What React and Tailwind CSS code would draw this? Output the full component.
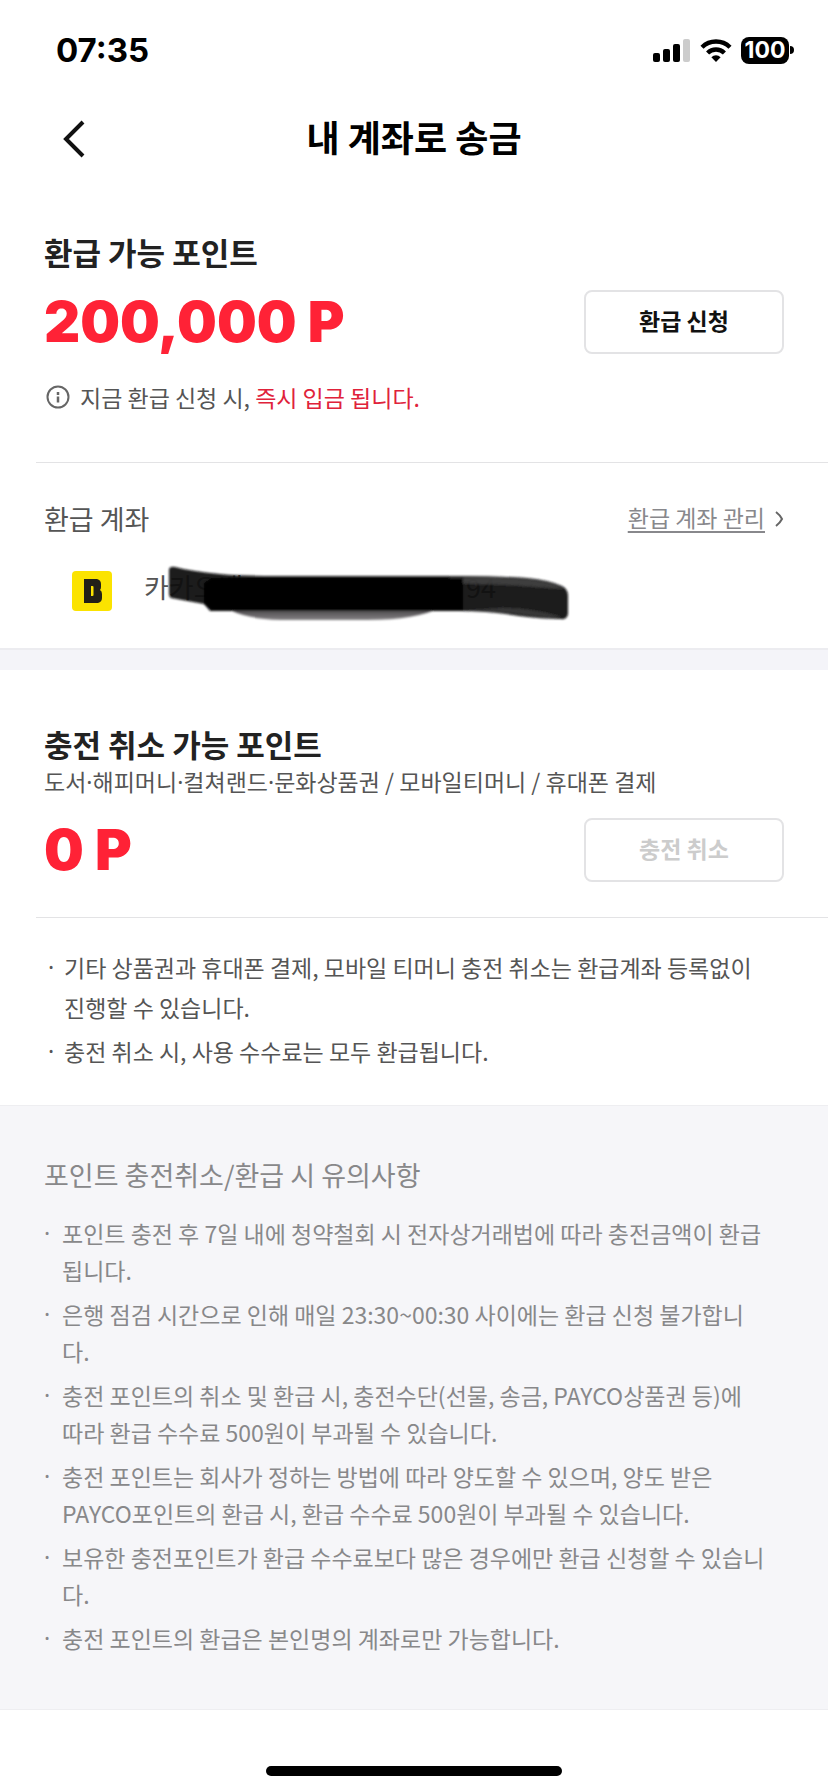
import React from 'react';

const chargeNotes = [
  '기타 상품권과 휴대폰 결제, 모바일 티머니 충전 취소는 환급계좌 등록없이 진행할 수 있습니다.',
  '충전 취소 시, 사용 수수료는 모두 환급됩니다.',
];

const cautions = [
  '포인트 충전 후 7일 내에 청약철회 시 전자상거래법에 따라 충전금액이 환급됩니다.',
  '은행 점검 시간으로 인해 매일 23:30~00:30 사이에는 환급 신청 불가합니다.',
  '충전 포인트의 취소 및 환급 시, 충전수단(선물, 송금, PAYCO상품권 등)에 따라 환급 수수료 500원이 부과될 수 있습니다.',
  '충전 포인트는 회사가 정하는 방법에 따라 양도할 수 있으며, 양도 받은 PAYCO포인트의 환급 시, 환급 수수료 500원이 부과될 수 있습니다.',
  '보유한 충전포인트가 환급 수수료보다 많은 경우에만 환급 신청할 수 있습니다.',
  '충전 포인트의 환급은 본인명의 계좌로만 가능합니다.',
];

const StatusBar = () => (
  <div className="h-[100px] pl-14 pr-[34px] flex items-center justify-between font-['Inter',sans-serif] text-black">
    <span className="text-[33px] leading-10 font-bold">07:35</span>
    <div className="flex items-center gap-[9px]">
      <svg width="38" height="24" viewBox="0 0 38 24" aria-hidden="true">
        <rect x="0" y="15" width="7" height="9" rx="2" />
        <rect x="10" y="11" width="7" height="13" rx="2" />
        <rect x="20" y="6" width="7" height="18" rx="2" />
        <rect x="30" y="1" width="7" height="23" rx="2" fill="#cccccc" />
      </svg>
      <svg width="32" height="24" viewBox="0 0 32 24" fill="none" stroke="#000" strokeWidth="4.4" aria-hidden="true">
        <path d="M2 9.2a20 20 0 0 1 28 0" />
        <path d="M7.6 15a12 12 0 0 1 16.8 0" />
        <path d="M16 24l-4.6-4.8a6.6 6.6 0 0 1 9.2 0z" fill="#000" stroke="none" />
      </svg>
      <div className="flex items-center gap-px">
        <span className="w-12 h-[27px] rounded-lg bg-black text-white text-[23px] leading-[27px] font-bold text-center">100</span>
        <span className="w-1 h-2 rounded-r-full bg-black" />
      </div>
    </div>
  </div>
);

const Header = () => (
  <header className="h-[78px] px-14 grid grid-cols-[40px_1fr_40px] items-center">
    <button type="button" aria-label="뒤로" className="h-10 flex items-center pl-1.5">
      <svg width="24" height="38" viewBox="0 0 24 38" fill="none" stroke="#111" strokeWidth="4">
        <path d="M21 2L4 19l17 17" />
      </svg>
    </button>
    <h1 className="pb-1.5 text-[36px] leading-[52px] font-bold text-center text-black">내 계좌로 송금</h1>
  </header>
);

const Amount = ({ value }) => (
  <p className="font-['Inter',sans-serif] text-[56px] leading-[64px] font-black text-[#ff2236]">{value} P</p>
);

const Dot = ({ className }) => <span className={`font-['Noto_Sans',sans-serif] ${className}`}>·</span>;

const NoteList = ({ items, className, dotClass }) => (
  <ul className={className}>
    {items.map((text) => (
      <li key={text} className="flex">
        <Dot className={dotClass} />
        <span className="flex-1">{text}</span>
      </li>
    ))}
  </ul>
);

const BankLogo = () => (
  <svg width="40" height="40" viewBox="0 0 40 40" aria-hidden="true">
    <rect width="40" height="40" rx="4" fill="#fbe300" />
    <path
      fillRule="evenodd"
      fill="#222018"
      d="M12 8h13q4 1 4 5v3q0 2-1 3 2 1 2 4v4q0 4-4 5H12zM19 15v10h1.500q1 0 1-1v-8q0-1-1-1z"
    />
  </svg>
);

// marker strokes hiding the account number
const Redaction = () => (
  <svg className="absolute left-4 top-[-10px]" width="416" height="64" viewBox="0 0 416 64" aria-hidden="true">
    <defs>
      <linearGradient id="fade" gradientUnits="userSpaceOnUse" x1="0" y1="46" x2="0" y2="60">
        <stop offset="0" stopColor="#3a383a" />
        <stop offset="1" stopColor="#8a878a" />
      </linearGradient>
      <filter id="soft" x="-5%" y="-10%" width="110%" height="120%">
        <feGaussianBlur stdDeviation="1" />
      </filter>
    </defs>
    <g filter="url(#soft)">
      <path d="M55 46h227q-26 13-74 13H120q-32-1-50-10z" fill="url(#fade)" />
      <path
        d="M9 8q1-3 6-2 15 4 45 7 20 2 60 2h180q40 0 67 2 22 2 35 8 6 3 6 10v18q-1 6-7 5-20 0-42-3-30-5-60-5H50L44 43 11 37q-2-1-2-5z"
        fill="#0c0c0d"
        fillOpacity="0.94"
      />
      <path d="M290 16q46-1 76 2 26 2 38 10-26-2-52-4l-62-2z" fill="#4a494b" fillOpacity="0.75" />
      <path d="M302 50l40-3q30 0 60 9-20 2-36-2-30-4-64-4z" fill="#4a494b" fillOpacity="0.6" />
      <path d="M52 17h251v32H52l-8-6V22z" fill="#000" />
    </g>
  </svg>
);

const App = () => {
  return (
    <div className="w-full bg-white font-['Noto_Sans_CJK_KR',sans-serif] text-[23px] text-[#555555]">
      <StatusBar />
      <Header />

      <main>
        {/* 환급 가능 포인트 */}
        <section className="pt-[54px] pb-[49px] px-11">
          <h2 className="text-[31px] leading-10 font-bold text-[#222222]">환급 가능 포인트</h2>
          <div className="mt-[18px] flex items-center justify-between">
            <Amount value="200,000" />
            <button type="button" className="w-[200px] h-16 pb-1 rounded-lg border-2 border-[#e3e3e5] font-bold text-[#111111]">
              환급 신청
            </button>
          </div>
          <p className="mt-[27px] flex items-center gap-2 leading-8">
            <svg width="28" height="26" viewBox="0 0 28 26" fill="none" stroke="#666" strokeWidth="2" aria-hidden="true">
              <circle cx="14" cy="13" r="10.500" />
              <path d="M14 8v3M14 12.500v6" strokeWidth="2.500" />
            </svg>
            <span>
              지금 환급 신청 시, <span className="text-[#e0223a]">즉시 입금 됩니다.</span>
            </span>
          </p>
        </section>

        {/* 환급 계좌 */}
        <section className="pb-[37px]">
          <div className="ml-9 border-t border-[#e3e3e5]" />
          <div className="pt-9 px-11 flex items-center justify-between">
            <h3 className="text-[27px] leading-10">환급 계좌</h3>
            <a href="#account" className="flex items-center gap-2.5 leading-8 text-[#88888c]">
              <span className="pb-1 underline underline-offset-4 decoration-2">환급 계좌 관리</span>
              <svg width="9" height="16" viewBox="0 0 9 16" fill="none" stroke="#666" strokeWidth="2" aria-hidden="true">
                <path d="M1 1q4 3 6 7-2 4-6 7" />
              </svg>
            </a>
          </div>
          <div className="mt-8 px-[72px] flex items-start gap-8">
            <BankLogo />
            <div className="relative w-[352px] flex justify-between text-[27px] leading-8">
              <span>카카오뱅크</span>
              <span>94</span>
              <Redaction />
            </div>
          </div>
        </section>

        <div className="h-[22px] border-t-2 border-[#ececf0] bg-[#f4f4f9]" />

        {/* 충전 취소 가능 포인트 */}
        <section className="pt-[54px] pb-[34px]">
          <div className="px-11 pb-[35px]">
            <h2 className="text-[31px] leading-10 font-bold text-[#222222]">충전 취소 가능 포인트</h2>
            <p className="mt-px leading-8">
              도서
              <Dot className="leading-none" />
              해피머니
              <Dot className="leading-none" />
              컬쳐랜드
              <Dot className="leading-none" />
              문화상품권 / 모바일티머니 / 휴대폰 결제
            </p>
            <div className="mt-[21px] flex items-center justify-between">
              <Amount value="0" />
              <button type="button" disabled className="w-[200px] h-16 pb-1 rounded-lg border-2 border-[#e3e3e5] font-bold text-[#cccccc]">
                충전 취소
              </button>
            </div>
          </div>
          <div className="ml-9 border-t border-[#e3e3e5]" />
          <NoteList
            items={chargeNotes}
            className="pt-[29px] pl-12 pr-[60px] flex flex-col gap-1 leading-10"
            dotClass="w-4"
          />
        </section>

        {/* 유의사항 */}
        <section className="pt-[49px] pb-[52px] pl-11 pr-[60px] border-y border-[#eeeef1] bg-[#f6f6f9] text-[#88888a]">
          <h3 className="text-[27px] leading-10">포인트 충전취소/환급 시 유의사항</h3>
          <NoteList items={cautions} className="mt-5 flex flex-col gap-[7px] leading-[37px]" dotClass="w-[18px]" />
        </section>
      </main>

      <div className="pt-14 pb-4 flex justify-center">
        <div className="w-[296px] h-2.5 rounded-full bg-black" />
      </div>
    </div>
  );
};

export default App;
